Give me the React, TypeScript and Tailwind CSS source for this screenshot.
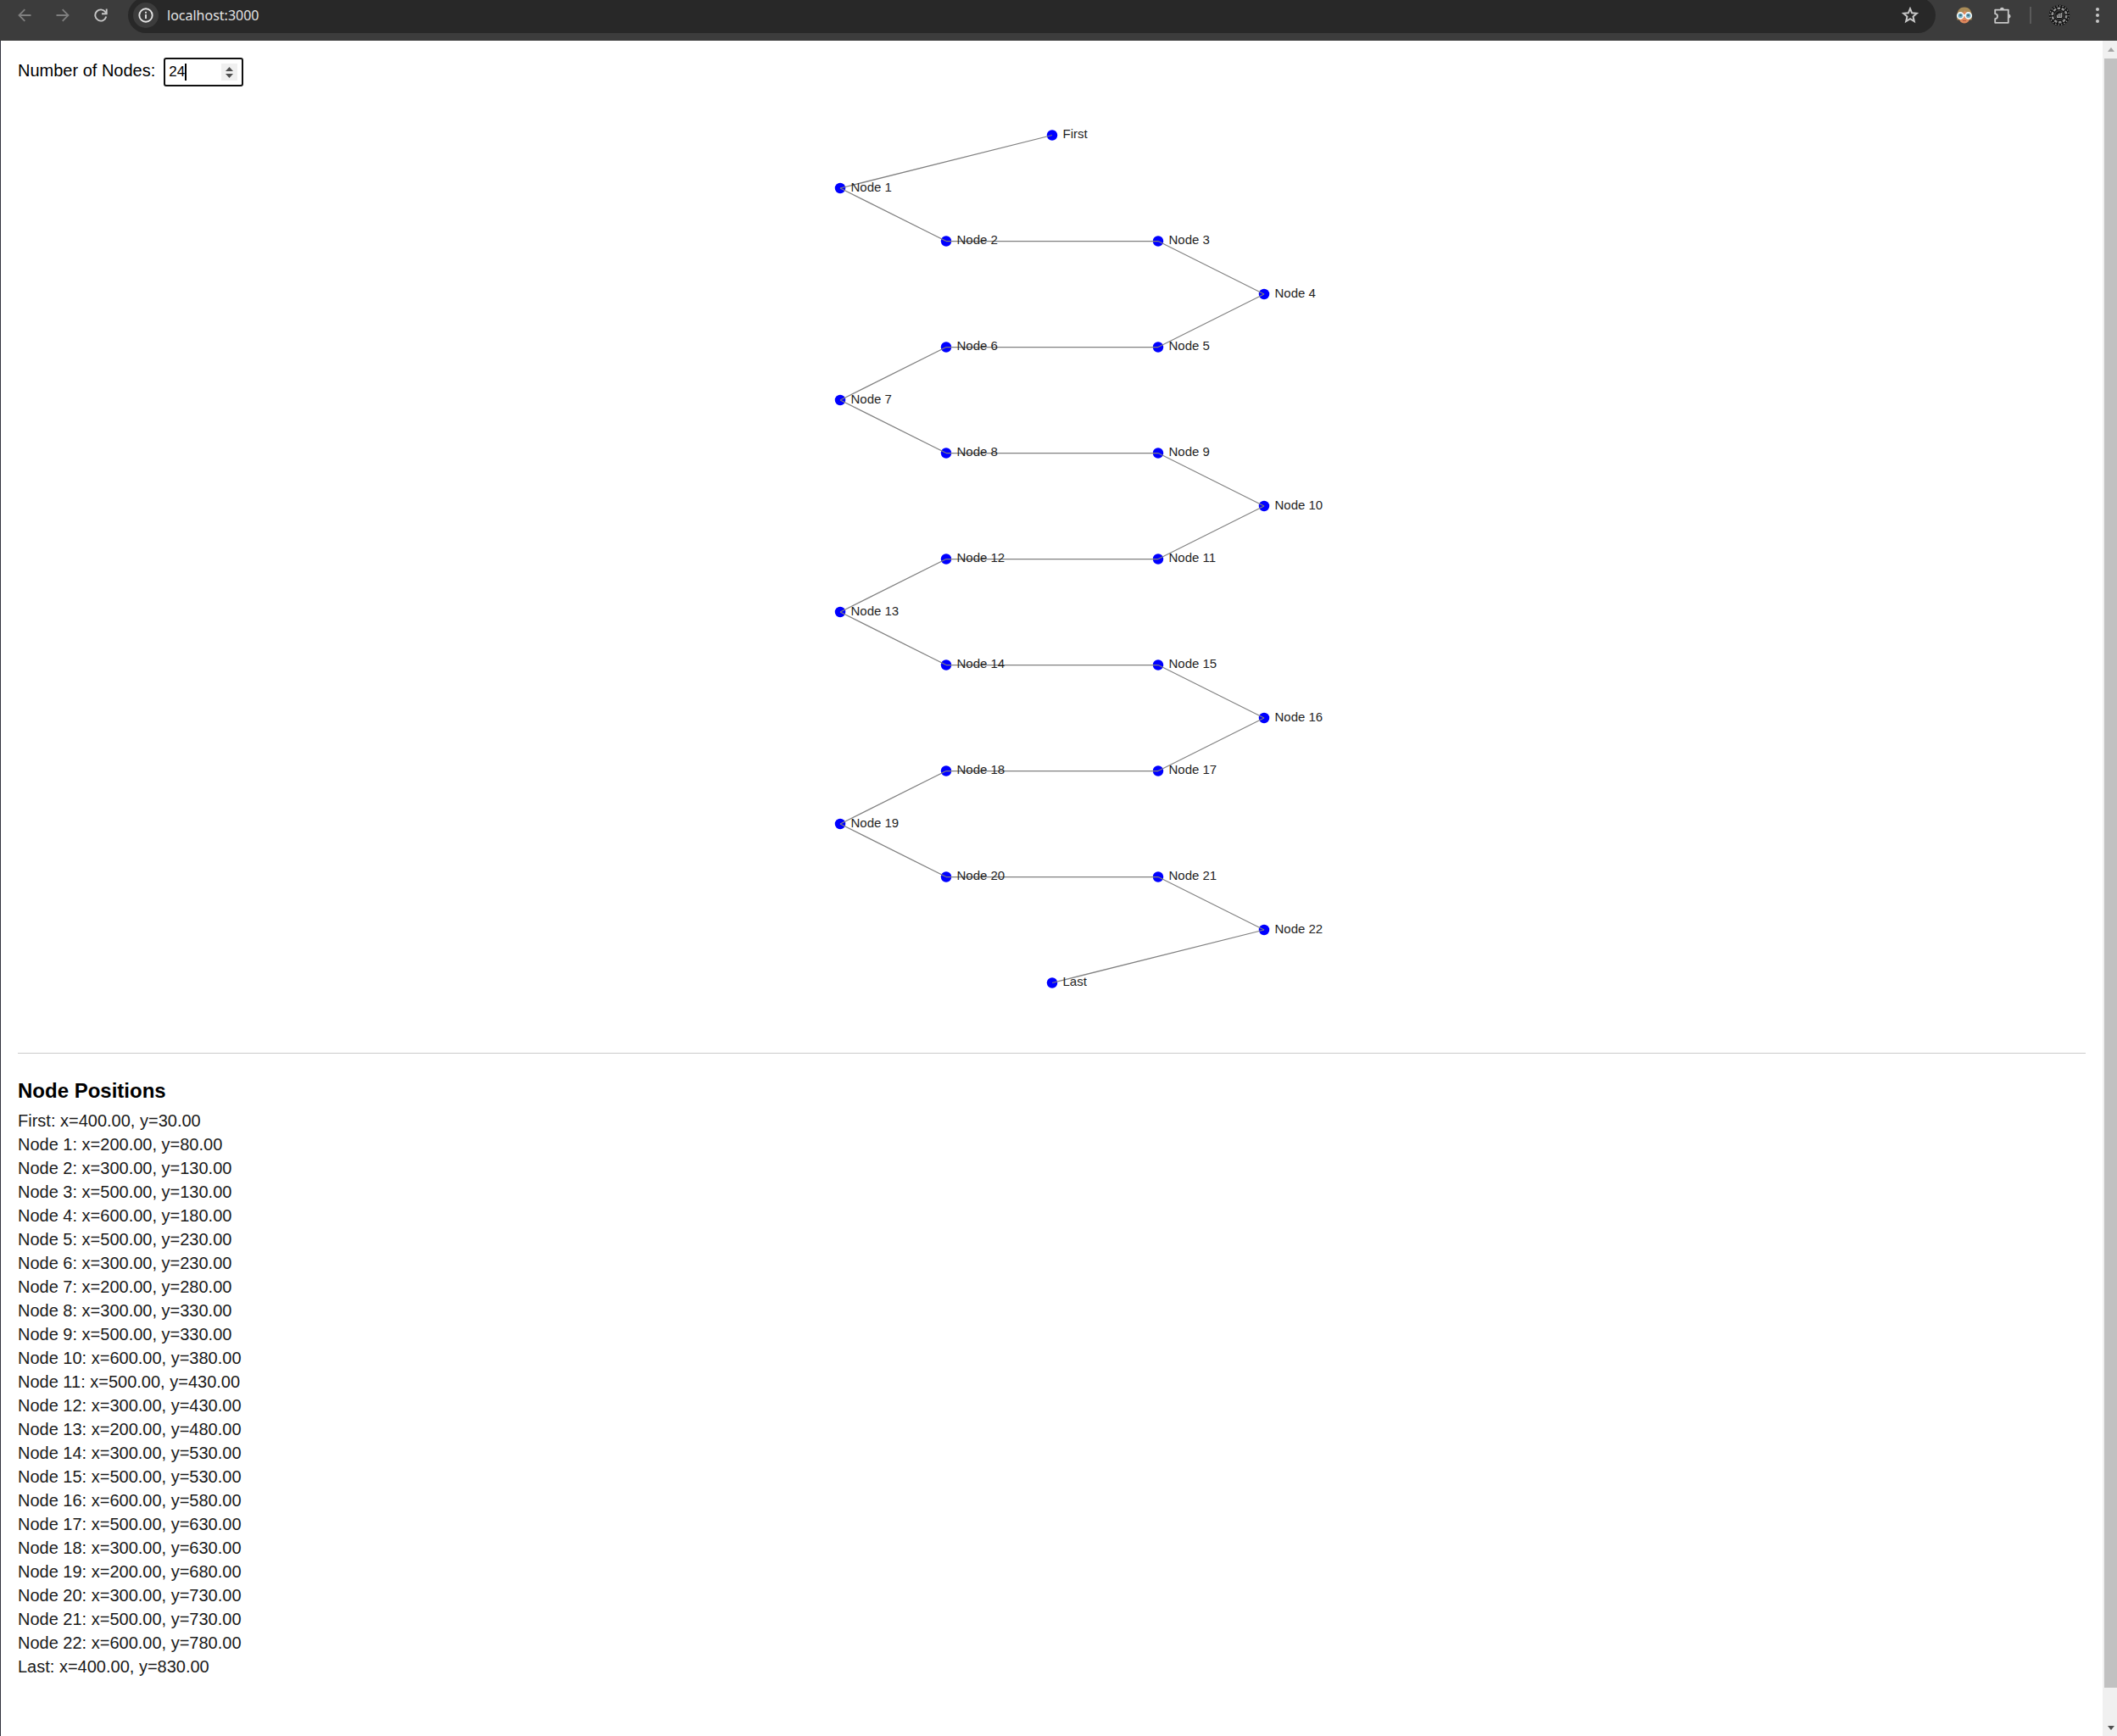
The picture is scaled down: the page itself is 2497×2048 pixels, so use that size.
import React, { useState } from "react";

type Point = { label: string; x: number; y: number };

const CYCLE = [300, 500, 600, 500, 300, 200];

function layoutNodes(count: number): Point[] {
  const points: Point[] = [];
  let y = 30;
  for (let i = 0; i < count; i++) {
    if (i === 0) {
      points.push({ label: "First", x: 400, y });
      continue;
    }
    const last = i === count - 1;
    const x = last ? 400 : CYCLE[(i + 4) % 6];
    const previous = points[i - 1].x;
    const level = !last && Math.abs(x - previous) === 200 && previous !== 400;
    if (!level) y += 50;
    points.push({ label: last ? "Last" : `Node ${i}`, x, y });
  }
  return points;
}

function BackIcon() {
  return (
    <svg className="size-4" viewBox="0 0 16 16" fill="none" stroke="currentColor" strokeWidth="1.8">
      <path d="M15.5 8H2M8.3 1.2 1.5 8l6.8 6.8" />
    </svg>
  );
}

function ForwardIcon() {
  return (
    <svg className="size-4" viewBox="0 0 16 16" fill="none" stroke="currentColor" strokeWidth="1.8">
      <path d="M.5 8H14M7.7 1.2 14.5 8l-6.8 6.8" />
    </svg>
  );
}

function ReloadIcon() {
  return (
    <svg className="size-4" viewBox="0 0 16 16" fill="none" stroke="currentColor" strokeWidth="1.9">
      <path d="M14.3 9.6A6.6 6.6 0 1 1 13.4 4.3L14.6 6" />
      <path d="M14.7.5v5.8H9" />
    </svg>
  );
}

function InfoIcon() {
  return (
    <svg className="size-[18px]" viewBox="0 0 18 18" fill="none" stroke="currentColor" strokeWidth="1.9">
      <circle cx="9" cy="9" r="7.7" />
      <path d="M9 8v5M9 4.8v1.9" />
    </svg>
  );
}

function StarIcon() {
  return (
    <svg className="size-5" viewBox="0 0 20 20" fill="none" stroke="currentColor" strokeWidth="2">
      <path d="m10 2.200 2.100 5.100 5.700.5-4.300 3.700 1.300 5.600-4.800-3-4.800 3 1.300-5.600L2.200 7.800l5.700-.5z" />
    </svg>
  );
}

function FaceIcon() {
  return (
    <svg className="size-5" viewBox="0 0 20 20">
      <path d="M1.500 15.500C0 5 4 .500 10 .500S20 5 18.500 15.500z" fill="#a98c58" />
      <path d="M3 9.500C6.500 9 9 7 10.500 4.200c1.500 2.500 4 4.300 6.500 5.300 0 6-2.500 10-7 10S3 15.500 3 9.500z" fill="#dd8a5e" />
      <circle cx="5.300" cy="10.500" r="3.600" fill="#74afc2" stroke="#f4f8fa" strokeWidth="1.600" />
      <circle cx="14.700" cy="10.500" r="3.600" fill="#74afc2" stroke="#f4f8fa" strokeWidth="1.600" />
      <path d="M8.800 10h2.400" stroke="#f4f8fa" strokeWidth="1.600" />
      <circle cx="5.500" cy="10" r="1.300" fill="#3d6c7e" />
      <circle cx="14.500" cy="10" r="1.300" fill="#3d6c7e" />
      <path d="M8 16.500h4" stroke="#b5563f" strokeWidth="1" />
    </svg>
  );
}

function PuzzleIcon() {
  return (
    <svg className="size-[22px]" viewBox="0 0 22 22" fill="none" stroke="currentColor" strokeWidth="1.800">
      <path d="M2.200 4.600h15.600v15.200H2.200v-4.600c3.800-.4 3.800-5.600 0-6z" strokeLinejoin="round" />
      <path d="M8 4.200a2.400 2.400 0 0 1 4.800 0zM18.200 9.800a2.400 2.400 0 0 1 0 4.800z" fill="currentColor" stroke="none" />
    </svg>
  );
}

function ProfileIcon() {
  return (
    <svg className="size-[26px]" viewBox="0 0 26 26" fill="none">
      <circle cx="13" cy="13" r="12.200" fill="#111" />
      <circle cx="13" cy="13" r="11.200" stroke="#8c8c8c" strokeWidth="1.200" strokeDasharray="1.500 2" />
      <circle cx="13" cy="13" r="8.300" stroke="#8f8f8f" strokeWidth="2.600" strokeDasharray="3.600 1.600" />
      <circle cx="13" cy="13" r="5.400" fill="#161616" stroke="#555" strokeWidth=".8" />
      <path d="M10.500 15v-2.500M12.300 15v-4M14 15v-4.500M15.700 15v-5M10 15.500h6" stroke="#a8a8a8" strokeWidth="1.200" />
    </svg>
  );
}

function MoreIcon() {
  return (
    <svg className="h-5 w-1" viewBox="0 0 4 20" fill="currentColor">
      <circle cx="2" cy="3" r="2" />
      <circle cx="2" cy="10" r="2" />
      <circle cx="2" cy="17" r="2" />
    </svg>
  );
}

function BrowserBar() {
  return (
    <header className="h-12 overflow-hidden bg-[#3c3c3c] text-[#c7c7c7]">
      <div className="flex h-9 items-center px-[21px]">
        <nav className="flex items-center gap-[29px] pr-6">
          <button aria-label="Back" className="text-[#7f7f7f]"><BackIcon /></button>
          <button aria-label="Forward" className="text-[#7f7f7f]"><ForwardIcon /></button>
          <button aria-label="Reload"><ReloadIcon /></button>
        </nav>
        <div className="flex h-[42px] shrink grow items-center gap-[10px] rounded-full bg-[#282828] pr-5 pl-[6px]">
          <button aria-label="Site information" className="flex size-[30px] shrink-0 items-center justify-center rounded-full bg-[#3c3c3c] text-[#e3e3e3]">
            <InfoIcon />
          </button>
          <input
            aria-label="Address"
            defaultValue="localhost:3000"
            className="min-w-0 grow bg-transparent font-['Noto_Sans','Open_Sans',sans-serif] text-base leading-6 text-[#e3e3e3] outline-none"
          />
          <button aria-label="Bookmark this page"><StarIcon /></button>
        </div>
        <div className="flex items-center pl-6">
          <button aria-label="Glasses extension"><FaceIcon /></button>
          <button aria-label="Extensions" className="ml-6"><PuzzleIcon /></button>
          <div className="ml-[21px] h-5 w-[2px] bg-[#5a5a5a]" />
          <button aria-label="Profile" className="ml-5"><ProfileIcon /></button>
          <button aria-label="Menu" className="ml-[30px]"><MoreIcon /></button>
        </div>
      </div>
    </header>
  );
}

function NodeGraph({ nodes }: { nodes: Point[] }) {
  return (
    <svg viewBox="0 0 800 896" className="mx-auto mt-5 block w-[1000px] max-w-full" role="img" aria-label="Node graph">
      {nodes.map((n) => (
        <circle key={n.label} cx={n.x} cy={n.y} r="5" fill="#0000ff" />
      ))}
      {nodes.slice(1).map((n, i) => (
        <line key={n.label} x1={nodes[i].x} y1={nodes[i].y} x2={n.x} y2={n.y} stroke="#808080" strokeWidth="1" />
      ))}
      {nodes.map((n) => (
        <text key={n.label} x={n.x + 10} y={n.y + 3} fontSize="12" fill="#1f1f1f">
          {n.label}
        </text>
      ))}
    </svg>
  );
}

function Scrollbar() {
  return (
    <div aria-hidden="true" className="flex w-[17px] shrink-0 flex-col bg-[#f0f0f0]">
      <div className="flex h-[21px] items-center justify-center pl-[2px]">
        <svg className="h-[5px] w-2" viewBox="0 0 8 5" fill="#a3a3a3"><path d="M4 0 8 5H0z" /></svg>
      </div>
      <div className="ml-[2px] grow bg-[#c1c1c1]" />
      <div className="flex h-[57px] items-end justify-center pb-[7px] pl-[2px]">
        <svg className="h-[5px] w-2" viewBox="0 0 8 5" fill="#505050"><path d="M4 5 8 0H0z" /></svg>
      </div>
    </div>
  );
}

export default function App() {
  const [count, setCount] = useState(24);
  const nodes = layoutNodes(count);
  const step = (by: number) => setCount((c) => Math.max(2, c + by));

  return (
    <div className="flex min-h-screen flex-col bg-white font-['Liberation_Sans',Arial,sans-serif] text-xl leading-7 text-black">
      <BrowserBar />
      <div className="flex grow border-l border-[#33343f]">
        <main className="min-w-0 grow p-5">
          <div className="flex h-[34px] items-start gap-[10px]">
            <label htmlFor="node-count" className="leading-[30px]">Number of Nodes:</label>
            <div className="relative">
              <input
                id="node-count"
                type="number"
                min={2}
                value={count}
                onChange={(e) => setCount(Math.max(2, Number(e.target.value)))}
                className="block h-[34px] w-[94px] [appearance:textfield] rounded-[3px] border-2 border-[#101010] bg-white pr-7 pl-1 text-[17px] caret-transparent outline-none"
              />
              <span className="absolute top-[7px] left-[25px] h-5 w-[2px] bg-black" />
              <div className="absolute top-[7px] right-[7px] flex h-5 w-[19px] flex-col items-center justify-center gap-[3px] bg-[#f0f0f0]">
                <button aria-label="Increase" onClick={() => step(1)}>
                  <svg className="block h-[5px] w-[9px]" viewBox="0 0 9 5" fill="#505050"><path d="M4.500 0 9 5H0z" /></svg>
                </button>
                <button aria-label="Decrease" onClick={() => step(-1)}>
                  <svg className="block h-[5px] w-[9px]" viewBox="0 0 9 5" fill="#505050"><path d="M4.500 5 9 0H0z" /></svg>
                </button>
              </div>
            </div>
          </div>
          <NodeGraph nodes={nodes} />
          <section className="border-t border-[#cccccc] pt-[30px]">
            <h3 className="mb-[7px] text-2xl leading-7 font-bold">Node Positions</h3>
            <ul className="text-[#1a1a1a]">
              {nodes.map((n) => (
                <li key={n.label}>{`${n.label}: x=${n.x.toFixed(2)}, y=${n.y.toFixed(2)}`}</li>
              ))}
            </ul>
          </section>
        </main>
        <Scrollbar />
      </div>
    </div>
  );
}
